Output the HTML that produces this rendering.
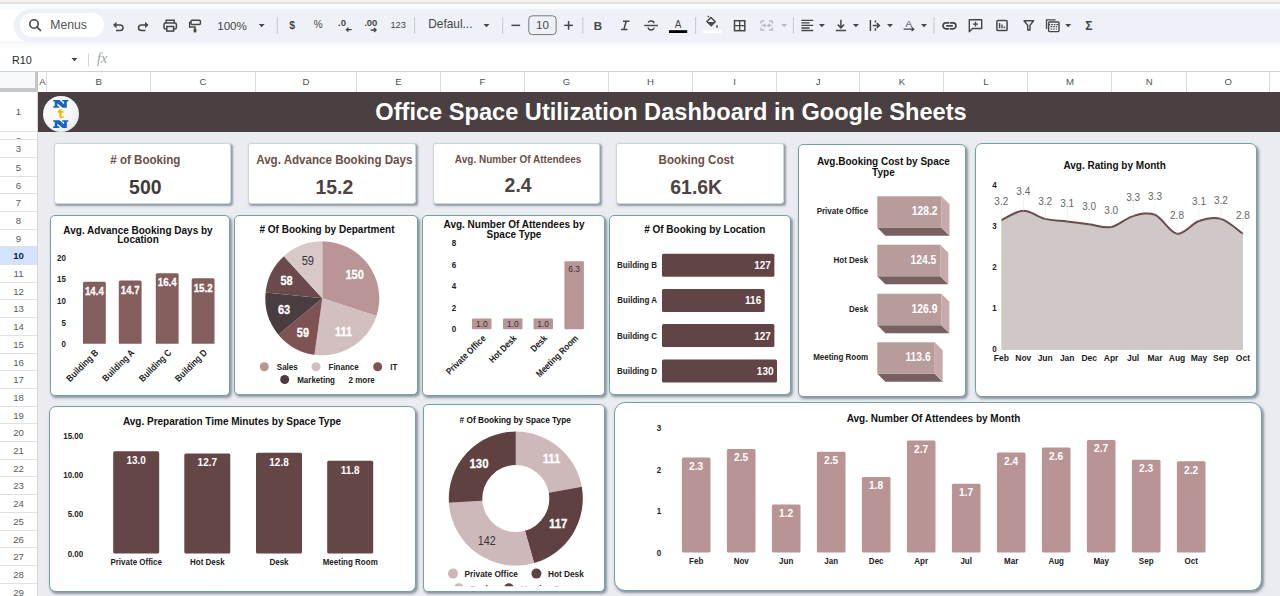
<!DOCTYPE html><html><head><meta charset="utf-8"><style>
*{margin:0;padding:0;box-sizing:border-box}
html,body{width:1280px;height:596px;overflow:hidden;background:#fff;font-family:"Liberation Sans", sans-serif}
.abs{position:absolute}
.card{position:absolute;background:#fff;border:1.3px solid #73a2a4;border-radius:5px;box-shadow:1.5px 2px 2.5px rgba(60,80,90,.55)}
.kpi{position:absolute;background:#fff;border:1px solid #c8d8db;border-radius:3px;box-shadow:1.5px 1.5px 2px rgba(60,80,90,.5)}
svg text{font-family:"Liberation Sans", sans-serif}
</style></head><body>

<div class="abs" style="left:0;top:0;width:1280px;height:2px;background:#f3f2f0"></div>
<div class="abs" style="left:0;top:2px;width:1280px;height:1.5px;background:#e2e2e2"></div>
<div class="abs" style="left:0;top:3.5px;width:1280px;height:5px;background:#fafbfd"></div>
<div class="abs" style="left:0;top:41px;width:1280px;height:7px;background:linear-gradient(#f4f6fb,#fdfdfe)"></div>
<div class="abs" style="left:14px;top:8.5px;width:1266px;height:33px;background:#eef2f8;border-radius:17px 0 0 17px;box-shadow:0 0 1.5px #eef2f8"></div>
<div class="abs" style="left:20px;top:13px;width:84px;height:24px;background:#fff;border-radius:12px"></div>
<div class="abs" style="left:12px;top:52.5px;font-size:10.8px;color:#1f1f1f;line-height:14px">R10</div>
<div class="abs" style="left:88px;top:53px;width:1px;height:14px;background:#d8d8d8"></div>
<div class="abs" style="left:97px;top:51px;font-family:'Liberation Serif',serif;font-style:italic;font-size:14px;color:#9aa0a6;line-height:16px">fx</div>
<div class="abs" style="left:0;top:71px;width:1280px;height:1px;background:#d0d0d0"></div>
<div class="abs" style="left:0;top:72px;width:35px;height:16px;background:#f8f9fa"></div>
<div class="abs" style="left:35px;top:72px;width:3px;height:20px;background:#c6c6c6"></div>
<div class="abs" style="left:0;top:88px;width:38px;height:3.5px;background:#c6c6c6"></div>
<div class="abs" style="left:46.0px;top:72px;width:1px;height:20px;background:#dcdcdc"></div>
<div class="abs" style="left:38.0px;top:72px;width:8.8px;height:20px;text-align:center;font-size:9.6px;line-height:20px;color:#505050">A</div>
<div class="abs" style="left:149.7px;top:72px;width:1px;height:20px;background:#dcdcdc"></div>
<div class="abs" style="left:46.8px;top:72px;width:103.7px;height:20px;text-align:center;font-size:9.6px;line-height:20px;color:#505050">B</div>
<div class="abs" style="left:254.7px;top:72px;width:1px;height:20px;background:#dcdcdc"></div>
<div class="abs" style="left:150.5px;top:72px;width:105.0px;height:20px;text-align:center;font-size:9.6px;line-height:20px;color:#505050">C</div>
<div class="abs" style="left:355.7px;top:72px;width:1px;height:20px;background:#dcdcdc"></div>
<div class="abs" style="left:255.5px;top:72px;width:101.0px;height:20px;text-align:center;font-size:9.6px;line-height:20px;color:#505050">D</div>
<div class="abs" style="left:439.7px;top:72px;width:1px;height:20px;background:#dcdcdc"></div>
<div class="abs" style="left:356.5px;top:72px;width:84.0px;height:20px;text-align:center;font-size:9.6px;line-height:20px;color:#505050">E</div>
<div class="abs" style="left:523.7px;top:72px;width:1px;height:20px;background:#dcdcdc"></div>
<div class="abs" style="left:440.5px;top:72px;width:84.0px;height:20px;text-align:center;font-size:9.6px;line-height:20px;color:#505050">F</div>
<div class="abs" style="left:607.7px;top:72px;width:1px;height:20px;background:#dcdcdc"></div>
<div class="abs" style="left:524.5px;top:72px;width:84.0px;height:20px;text-align:center;font-size:9.6px;line-height:20px;color:#505050">G</div>
<div class="abs" style="left:691.7px;top:72px;width:1px;height:20px;background:#dcdcdc"></div>
<div class="abs" style="left:608.5px;top:72px;width:84.0px;height:20px;text-align:center;font-size:9.6px;line-height:20px;color:#505050">H</div>
<div class="abs" style="left:775.7px;top:72px;width:1px;height:20px;background:#dcdcdc"></div>
<div class="abs" style="left:692.5px;top:72px;width:84.0px;height:20px;text-align:center;font-size:9.6px;line-height:20px;color:#505050">I</div>
<div class="abs" style="left:859.2px;top:72px;width:1px;height:20px;background:#dcdcdc"></div>
<div class="abs" style="left:776.5px;top:72px;width:83.5px;height:20px;text-align:center;font-size:9.6px;line-height:20px;color:#505050">J</div>
<div class="abs" style="left:943.2px;top:72px;width:1px;height:20px;background:#dcdcdc"></div>
<div class="abs" style="left:860.0px;top:72px;width:84.0px;height:20px;text-align:center;font-size:9.6px;line-height:20px;color:#505050">K</div>
<div class="abs" style="left:1027.2px;top:72px;width:1px;height:20px;background:#dcdcdc"></div>
<div class="abs" style="left:944.0px;top:72px;width:84.0px;height:20px;text-align:center;font-size:9.6px;line-height:20px;color:#505050">L</div>
<div class="abs" style="left:1111.2px;top:72px;width:1px;height:20px;background:#dcdcdc"></div>
<div class="abs" style="left:1028.0px;top:72px;width:84.0px;height:20px;text-align:center;font-size:9.6px;line-height:20px;color:#505050">M</div>
<div class="abs" style="left:1185.7px;top:72px;width:1px;height:20px;background:#dcdcdc"></div>
<div class="abs" style="left:1112.0px;top:72px;width:74.5px;height:20px;text-align:center;font-size:9.6px;line-height:20px;color:#505050">N</div>
<div class="abs" style="left:1269.2px;top:72px;width:1px;height:20px;background:#dcdcdc"></div>
<div class="abs" style="left:1186.5px;top:72px;width:83.5px;height:20px;text-align:center;font-size:9.6px;line-height:20px;color:#505050">O</div>
<div class="abs" style="left:1289.2px;top:72px;width:1px;height:20px;background:#dcdcdc"></div>
<div class="abs" style="left:1270.0px;top:72px;width:20.0px;height:20px;text-align:center;font-size:9.6px;line-height:20px;color:#505050"></div>
<div class="abs" style="left:37px;top:92px;width:1px;height:504px;background:#d6d6d6"></div>
<div class="abs" style="left:0;top:92.0px;width:37px;height:40.0px;background:#fff;overflow:hidden;text-align:center;font-size:9.6px;font-weight:normal;line-height:40.0px;color:#5a5a5a">1</div>
<div class="abs" style="left:0;top:131px;width:37px;height:1px;background:#e1e1e1"></div>
<div class="abs" style="left:0;top:132.0px;width:37px;height:8.0px;background:#fff;overflow:hidden;text-align:center;font-size:9.6px;font-weight:normal;line-height:17.7px;color:#5a5a5a">2</div>
<div class="abs" style="left:0;top:139px;width:37px;height:1px;background:#e1e1e1"></div>
<div class="abs" style="left:0;top:140.0px;width:37px;height:18.0px;background:#fff;overflow:hidden;text-align:center;font-size:9.6px;font-weight:normal;line-height:18.0px;color:#5a5a5a">3</div>
<div class="abs" style="left:0;top:157px;width:37px;height:1px;background:#e1e1e1"></div>
<div class="abs" style="left:0;top:158.0px;width:37px;height:19.0px;background:#fff;overflow:hidden;text-align:center;font-size:9.6px;font-weight:normal;line-height:19.0px;color:#5a5a5a">5</div>
<div class="abs" style="left:0;top:176px;width:37px;height:1px;background:#e1e1e1"></div>
<div class="abs" style="left:0;top:177.0px;width:37px;height:17.0px;background:#fff;overflow:hidden;text-align:center;font-size:9.6px;font-weight:normal;line-height:17.7px;color:#5a5a5a">6</div>
<div class="abs" style="left:0;top:193px;width:37px;height:1px;background:#e1e1e1"></div>
<div class="abs" style="left:0;top:194.0px;width:37px;height:18.0px;background:#fff;overflow:hidden;text-align:center;font-size:9.6px;font-weight:normal;line-height:18.0px;color:#5a5a5a">7</div>
<div class="abs" style="left:0;top:211px;width:37px;height:1px;background:#e1e1e1"></div>
<div class="abs" style="left:0;top:212.0px;width:37px;height:18.0px;background:#fff;overflow:hidden;text-align:center;font-size:9.6px;font-weight:normal;line-height:18.0px;color:#5a5a5a">8</div>
<div class="abs" style="left:0;top:229px;width:37px;height:1px;background:#e1e1e1"></div>
<div class="abs" style="left:0;top:230.0px;width:37px;height:17.0px;background:#fff;overflow:hidden;text-align:center;font-size:9.6px;font-weight:normal;line-height:17.7px;color:#5a5a5a">9</div>
<div class="abs" style="left:0;top:246px;width:37px;height:1px;background:#e1e1e1"></div>
<div class="abs" style="left:0;top:247.0px;width:37px;height:18.0px;background:#d3e3fd;overflow:hidden;text-align:center;font-size:9.6px;font-weight:bold;line-height:18.0px;color:#0b1f4a">10</div>
<div class="abs" style="left:0;top:264px;width:37px;height:1px;background:#e1e1e1"></div>
<div class="abs" style="left:0;top:265.0px;width:37px;height:18.0px;background:#fff;overflow:hidden;text-align:center;font-size:9.6px;font-weight:normal;line-height:18.0px;color:#5a5a5a">11</div>
<div class="abs" style="left:0;top:282px;width:37px;height:1px;background:#e1e1e1"></div>
<div class="abs" style="left:0;top:283.0px;width:37px;height:17.0px;background:#fff;overflow:hidden;text-align:center;font-size:9.6px;font-weight:normal;line-height:17.7px;color:#5a5a5a">12</div>
<div class="abs" style="left:0;top:299px;width:37px;height:1px;background:#e1e1e1"></div>
<div class="abs" style="left:0;top:300.0px;width:37px;height:18.0px;background:#fff;overflow:hidden;text-align:center;font-size:9.6px;font-weight:normal;line-height:18.0px;color:#5a5a5a">13</div>
<div class="abs" style="left:0;top:317px;width:37px;height:1px;background:#e1e1e1"></div>
<div class="abs" style="left:0;top:318.0px;width:37px;height:18.0px;background:#fff;overflow:hidden;text-align:center;font-size:9.6px;font-weight:normal;line-height:18.0px;color:#5a5a5a">14</div>
<div class="abs" style="left:0;top:335px;width:37px;height:1px;background:#e1e1e1"></div>
<div class="abs" style="left:0;top:336.0px;width:37px;height:18.0px;background:#fff;overflow:hidden;text-align:center;font-size:9.6px;font-weight:normal;line-height:18.0px;color:#5a5a5a">15</div>
<div class="abs" style="left:0;top:353px;width:37px;height:1px;background:#e1e1e1"></div>
<div class="abs" style="left:0;top:354.0px;width:37px;height:17.0px;background:#fff;overflow:hidden;text-align:center;font-size:9.6px;font-weight:normal;line-height:17.7px;color:#5a5a5a">16</div>
<div class="abs" style="left:0;top:370px;width:37px;height:1px;background:#e1e1e1"></div>
<div class="abs" style="left:0;top:371.0px;width:37px;height:18.0px;background:#fff;overflow:hidden;text-align:center;font-size:9.6px;font-weight:normal;line-height:18.0px;color:#5a5a5a">17</div>
<div class="abs" style="left:0;top:388px;width:37px;height:1px;background:#e1e1e1"></div>
<div class="abs" style="left:0;top:389.0px;width:37px;height:18.0px;background:#fff;overflow:hidden;text-align:center;font-size:9.6px;font-weight:normal;line-height:18.0px;color:#5a5a5a">18</div>
<div class="abs" style="left:0;top:406px;width:37px;height:1px;background:#e1e1e1"></div>
<div class="abs" style="left:0;top:407.0px;width:37px;height:17.0px;background:#fff;overflow:hidden;text-align:center;font-size:9.6px;font-weight:normal;line-height:17.7px;color:#5a5a5a">19</div>
<div class="abs" style="left:0;top:423px;width:37px;height:1px;background:#e1e1e1"></div>
<div class="abs" style="left:0;top:424.0px;width:37px;height:18.0px;background:#fff;overflow:hidden;text-align:center;font-size:9.6px;font-weight:normal;line-height:18.0px;color:#5a5a5a">20</div>
<div class="abs" style="left:0;top:441px;width:37px;height:1px;background:#e1e1e1"></div>
<div class="abs" style="left:0;top:442.0px;width:37px;height:18.0px;background:#fff;overflow:hidden;text-align:center;font-size:9.6px;font-weight:normal;line-height:18.0px;color:#5a5a5a">21</div>
<div class="abs" style="left:0;top:459px;width:37px;height:1px;background:#e1e1e1"></div>
<div class="abs" style="left:0;top:460.0px;width:37px;height:17.0px;background:#fff;overflow:hidden;text-align:center;font-size:9.6px;font-weight:normal;line-height:17.7px;color:#5a5a5a">22</div>
<div class="abs" style="left:0;top:476px;width:37px;height:1px;background:#e1e1e1"></div>
<div class="abs" style="left:0;top:477.0px;width:37px;height:18.0px;background:#fff;overflow:hidden;text-align:center;font-size:9.6px;font-weight:normal;line-height:18.0px;color:#5a5a5a">23</div>
<div class="abs" style="left:0;top:494px;width:37px;height:1px;background:#e1e1e1"></div>
<div class="abs" style="left:0;top:495.0px;width:37px;height:18.0px;background:#fff;overflow:hidden;text-align:center;font-size:9.6px;font-weight:normal;line-height:18.0px;color:#5a5a5a">24</div>
<div class="abs" style="left:0;top:512px;width:37px;height:1px;background:#e1e1e1"></div>
<div class="abs" style="left:0;top:513.0px;width:37px;height:18.0px;background:#fff;overflow:hidden;text-align:center;font-size:9.6px;font-weight:normal;line-height:18.0px;color:#5a5a5a">25</div>
<div class="abs" style="left:0;top:530px;width:37px;height:1px;background:#e1e1e1"></div>
<div class="abs" style="left:0;top:531.0px;width:37px;height:17.0px;background:#fff;overflow:hidden;text-align:center;font-size:9.6px;font-weight:normal;line-height:17.7px;color:#5a5a5a">26</div>
<div class="abs" style="left:0;top:547px;width:37px;height:1px;background:#e1e1e1"></div>
<div class="abs" style="left:0;top:548.0px;width:37px;height:18.0px;background:#fff;overflow:hidden;text-align:center;font-size:9.6px;font-weight:normal;line-height:18.0px;color:#5a5a5a">27</div>
<div class="abs" style="left:0;top:565px;width:37px;height:1px;background:#e1e1e1"></div>
<div class="abs" style="left:0;top:566.0px;width:37px;height:18.0px;background:#fff;overflow:hidden;text-align:center;font-size:9.6px;font-weight:normal;line-height:18.0px;color:#5a5a5a">28</div>
<div class="abs" style="left:0;top:583px;width:37px;height:1px;background:#e1e1e1"></div>
<div class="abs" style="left:0;top:584.0px;width:37px;height:17.0px;background:#fff;overflow:hidden;text-align:center;font-size:9.6px;font-weight:normal;line-height:17.7px;color:#5a5a5a">29</div>
<div class="abs" style="left:0;top:600px;width:37px;height:1px;background:#e1e1e1"></div>
<div class="abs" style="left:38px;top:132px;width:1242px;height:464px;background:#ebebf2"></div>
<div class="abs" style="left:38px;top:92px;width:1242px;height:40px;background:#4a4041"></div>
<div class="abs" style="left:38px;top:92px;width:1242px;height:40px;text-align:center;padding-left:24px;font-size:23.6px;font-weight:bold;color:#fff;line-height:40px">Office Space Utilization Dashboard in Google Sheets</div>
<div class="abs" style="left:42.5px;top:95.5px;width:36.5px;height:36.5px;border-radius:50%;background:radial-gradient(circle at 40% 35%,#fff 0%,#f4f4f6 55%,#dcdce2 100%)"></div>
<svg class="abs" style="left:0;top:0" width="100" height="140"><path d="M53.20,100.00 L59.54,100.00 L64.07,104.23 L64.07,101.54 L62.26,101.54 L62.26,100.00 L68.30,100.00 L68.30,101.54 L66.79,101.54 L66.79,107.70 L62.56,107.70 L57.43,103.23 L57.43,106.16 L59.24,106.16 L59.24,107.70 L53.20,107.70 L53.20,106.16 L54.71,106.16 L54.71,101.54 L53.20,101.54 Z" fill="#1565c0"/><path d="M53.20,120.20 L59.54,120.20 L64.07,124.44 L64.07,121.74 L62.26,121.74 L62.26,120.20 L68.30,120.20 L68.30,121.74 L66.79,121.74 L66.79,127.90 L62.56,127.90 L57.43,123.43 L57.43,126.36 L59.24,126.36 L59.24,127.90 L53.20,127.90 L53.20,126.36 L54.71,126.36 L54.71,121.74 L53.20,121.74 Z" fill="#1565c0"/><path d="M59.5,109.5 L61.6,109 V111.2 H63.6 V112.8 H61.6 V116 Q61.8,117 63.8,116.3 L63.6,117.6 Q60,119.5 59.4,116.6 V112.8 H57.8 V111.4 Z" fill="#f4b400"/></svg>
<svg class="abs" style="left:0;top:0" width="1280" height="80"><circle cx="34" cy="24" r="4.2" fill="none" stroke="#444746" stroke-width="1.6"/><path d="M37,27 L40.5,30.5" stroke="#444746" stroke-width="1.7" stroke-linecap="round"/><text x="50.3" y="29.3" font-size="12.2" font-family="Liberation Sans" font-weight="normal" fill="#555" text-anchor="start" >Menus</text><path d="M115.5,25 H120 A3,2.8 0 0 1 120,30.6 H116" fill="none" stroke="#444746" stroke-width="1.5"/><path d="M113,25 L116.5,21.8 V28.2 Z" fill="#444746"/><path d="M146,25 H141.5 A3,2.8 0 0 0 141.5,30.6 H145.5" fill="none" stroke="#444746" stroke-width="1.5"/><path d="M148.5,25 L145,21.8 V28.2 Z" fill="#444746"/><path d="M166.2,23 V20.2 H174.2 V23" fill="none" stroke="#444746" stroke-width="1.5"/><rect x="164" y="23" width="12.4" height="6" rx="1.5" fill="none" stroke="#444746" stroke-width="1.5"/><rect x="166.8" y="26.5" width="6.8" height="4.6" fill="#eef2f9" stroke="#444746" stroke-width="1.5"/><rect x="191" y="20.3" width="9.4" height="4.2" rx="1" fill="none" stroke="#444746" stroke-width="1.5"/><path d="M191,22.4 H189.6 V27 H195 V29" fill="none" stroke="#444746" stroke-width="1.4"/><rect x="193.6" y="28.5" width="2.8" height="4" rx="1" fill="#444746"/><text x="217.2" y="29.6" font-size="11.6" font-family="Liberation Sans" font-weight="normal" fill="#444746" text-anchor="start" >100%</text><path d="M258.7,24.0 L264.7,24.0 L261.7,27.3 Z" fill="#444746"/><rect x="276.8" y="17" width="1" height="17" fill="#c7c7c7"/><text x="292.2" y="28.6" font-size="10.5" font-family="Liberation Sans" font-weight="bold" fill="#444746" text-anchor="middle" >$</text><text x="318.3" y="28.4" font-size="10" font-family="Liberation Sans" font-weight="normal" fill="#444746" text-anchor="middle" >%</text><text x="342" y="26.4" font-size="9.5" font-family="Liberation Sans" font-weight="bold" fill="#444746" text-anchor="middle" >.0</text><path d="M351.7,29.7 H346.5 M348.5,27.8 L346.4,29.7 L348.5,31.6" fill="none" stroke="#444746" stroke-width="1.3"/><text x="370.8" y="26.4" font-size="9.5" font-family="Liberation Sans" font-weight="bold" fill="#444746" text-anchor="middle" >.00</text><path d="M370.6,30 H376 M374,28.1 L376.1,30 L374,31.9" fill="none" stroke="#444746" stroke-width="1.3"/><text x="398.2" y="28.2" font-size="9.3" font-family="Liberation Sans" font-weight="normal" fill="#444746" text-anchor="middle" >123</text><rect x="414.1" y="17" width="1" height="17" fill="#c7c7c7"/><text x="428.2" y="28.4" font-size="11.9" font-family="Liberation Sans" font-weight="normal" fill="#444746" text-anchor="start" >Defaul...</text><path d="M483.5,24.0 L489.5,24.0 L486.5,27.3 Z" fill="#444746"/><rect x="502.2" y="17" width="1" height="17" fill="#c7c7c7"/><rect x="511.4" y="24.6" width="8.7" height="1.5" fill="#444746"/><rect x="528.8" y="15.8" width="27.3" height="18.8" rx="3.5" fill="none" stroke="#767976" stroke-width="1"/><text x="542.4" y="28.8" font-size="11.6" font-family="Liberation Sans" font-weight="normal" fill="#444746" text-anchor="middle" >10</text><rect x="564.2" y="24.6" width="8.8" height="1.5" fill="#444746"/><rect x="567.85" y="21" width="1.5" height="8.8" fill="#444746"/><rect x="582.4" y="17" width="1" height="17" fill="#c7c7c7"/><text x="598" y="29.6" font-size="11.5" font-family="Liberation Sans" font-weight="bold" fill="#444746" text-anchor="middle" >B</text><path d="M623,21.2 H629.5 M621,29.6 H627.5 M626.2,21.2 L623.8,29.6" fill="none" stroke="#444746" stroke-width="1.5"/><path d="M644.2,25.5 H658" stroke="#444746" stroke-width="1.4"/><path d="M654,23.2 C654,20.6 648.5,20.2 648.3,22.6 M648.2,27.6 C648.2,30.8 654.2,30.8 654,27.6" fill="none" stroke="#444746" stroke-width="1.4"/><text x="678.2" y="27.6" font-size="10" font-family="Liberation Sans" font-weight="normal" fill="#444746" text-anchor="middle" >A</text><rect x="669" y="30.2" width="18.2" height="2.8" fill="#000"/><rect x="695.1" y="17" width="1" height="17" fill="#c7c7c7"/><path d="M707,21.5 L711,17.5 L715.2,21.7 L711.2,25.7 Z" fill="none" stroke="#444746" stroke-width="1.5"/><path d="M707.6,22 H714.7 L711.2,25.5 Z" fill="#444746"/><path d="M709,17 L707.8,15.9" stroke="#444746" stroke-width="1.4"/><path d="M717,24.5 Q718.6,27 717,28 Q715.4,27 717,24.5 Z" fill="#444746"/><rect x="702.6" y="30.3" width="19.4" height="2.6" fill="#fff"/><rect x="734.5" y="20.7" width="10.3" height="10" fill="none" stroke="#444746" stroke-width="1.5"/><path d="M739.65,20.7 V30.7 M734.5,25.7 H744.8" stroke="#444746" stroke-width="1.3"/><path d="M761,21 V23.4 M761,27.4 V30 H764.3 M761,21 H764.3 M772.4,21 V23.4 M772.4,27.4 V30 H769 M772.4,21 H769" fill="none" stroke="#b8babc" stroke-width="1.3"/><path d="M761.5,25.4 H765.5 M764,23.8 L765.8,25.4 L764,27 M771.8,25.4 H768 M769.5,23.8 L767.6,25.4 L769.5,27" fill="none" stroke="#b8babc" stroke-width="1.1"/><path d="M781.2,24.0 L787.2,24.0 L784.2,27.3 Z" fill="#b8babc"/><rect x="792.9" y="17" width="1" height="17" fill="#c7c7c7"/><path d="M801.4,20.3 H813.2 M801.4,22.9 H809.6 M801.4,25.4 H813.2 M801.4,28 H809.6 M801.4,30.5 H813.2" stroke="#444746" stroke-width="1.3"/><path d="M818.9,24.0 L824.9,24.0 L821.9,27.3 Z" fill="#444746"/><path d="M840.9,19.8 V27.5 M837.7,24.5 L840.9,27.8 L844.1,24.5 M835.8,30.6 H846" fill="none" stroke="#444746" stroke-width="1.5"/><path d="M852.9,24.0 L858.9,24.0 L855.9,27.3 Z" fill="#444746"/><path d="M870.4,20 V31 M875.4,20.5 V22.5 M875.4,28.3 V30.8 M872.8,25.5 H879 M876.8,23 L879.4,25.5 L876.8,28" fill="none" stroke="#444746" stroke-width="1.5"/><path d="M887,24.0 L893,24.0 L890,27.3 Z" fill="#444746"/><text x="908.7" y="26.8" font-size="9.8" font-family="Liberation Sans" font-weight="normal" fill="#444746" text-anchor="middle" >A</text><path d="M903.6,29.2 H913.5 M911.6,27.4 L913.8,29.2 L911.6,31" fill="none" stroke="#444746" stroke-width="1.3"/><path d="M921,24.0 L927,24.0 L924,27.3 Z" fill="#444746"/><rect x="933.4" y="17" width="1" height="17" fill="#c7c7c7"/><path d="M948.5,22.8 H946 A3,3 0 0 0 946,28.8 H948.5 M950.5,22.8 H953 A3,3 0 0 1 953,28.8 H950.5 M946.8,25.8 H952.2" fill="none" stroke="#444746" stroke-width="1.7" stroke-linecap="round"/><path d="M969.3,31.7 V19.8 H981.7 V28.5 H972.5 Z" fill="none" stroke="#444746" stroke-width="1.4" stroke-linejoin="round"/><path d="M975.5,21.7 V26.6 M973,24.15 H978" stroke="#444746" stroke-width="1.4"/><rect x="996.9" y="20.4" width="10.2" height="10.2" rx="1.2" fill="none" stroke="#444746" stroke-width="1.5"/><path d="M999.6,23 V28.3 M1002,24.6 V28.3 M1004.4,26.4 V28.3" stroke="#444746" stroke-width="1.4"/><path d="M1024,20.8 H1033.6 L1030,25.3 V30 H1027.7 V25.3 Z" fill="none" stroke="#444746" stroke-width="1.4" stroke-linejoin="round"/><path d="M1046.5,29 V19.9 H1055.6" fill="none" stroke="#444746" stroke-width="1.3"/><rect x="1048.6" y="22" width="10.4" height="9.6" rx="1" fill="none" stroke="#444746" stroke-width="1.4"/><path d="M1048.6,24.6 H1059 M1050.6,26.6 H1057 M1050.6,29 H1057" stroke="#444746" stroke-width="1.2" stroke-dasharray="1.6,1"/><path d="M1065.2,24.0 L1071.2,24.0 L1068.2,27.3 Z" fill="#444746"/><text x="1088.8" y="30" font-size="12" font-family="Liberation Sans" font-weight="bold" fill="#444746" text-anchor="middle" >Σ</text><path d="M71.5,58.0 L77.5,58.0 L74.5,61.3 Z" fill="#444"/></svg>
<div class="kpi" style="left:53.8px;top:142.9px;width:177.2px;height:61.0px;"></div>
<div class="kpi" style="left:248.4px;top:142.9px;width:168.1px;height:61.0px;"></div>
<div class="kpi" style="left:432.8px;top:142.9px;width:167.5px;height:61.0px;"></div>
<div class="kpi" style="left:616.4px;top:142.9px;width:167.5px;height:61.0px;"></div>
<div class="card" style="left:50.0px;top:215.0px;width:179.6px;height:180.6px;border-radius:5px"></div>
<div class="card" style="left:234.4px;top:215.0px;width:183.6px;height:179.6px;border-radius:5px"></div>
<div class="card" style="left:421.7px;top:215.0px;width:182.9px;height:180.6px;border-radius:5px"></div>
<div class="card" style="left:609.4px;top:215.0px;width:181.9px;height:179.6px;border-radius:5px"></div>
<div class="card" style="left:798.2px;top:144.4px;width:167.8px;height:252.6px;border-radius:5px"></div>
<div class="card" style="left:975.0px;top:143.2px;width:282.4px;height:253.8px;border-radius:7px"></div>
<div class="card" style="left:49.4px;top:406.0px;width:366.2px;height:186.3px;border-radius:7px"></div>
<div class="card" style="left:422.5px;top:404.4px;width:182.3px;height:187.8px;border-radius:5px"></div>
<div class="card" style="left:614.2px;top:402.4px;width:647.6px;height:188.6px;border-radius:11px"></div>
<svg class="abs" style="left:0;top:0" width="1280" height="596" viewBox="0 0 1280 596"><text transform="translate(145.3,159.5) scale(1,1.05)" font-size="11.6" fill="#6a4f4b" font-weight="bold" text-anchor="middle" dominant-baseline="central" ># of Booking</text>
<text transform="translate(145.3,186.7) scale(1,1.08)" font-size="19.4" fill="#3f3b3b" font-weight="bold" text-anchor="middle" dominant-baseline="central" >500</text>
<text transform="translate(334.3,159.5) scale(1,1.05)" font-size="11.6" fill="#6a4f4b" font-weight="bold" text-anchor="middle" dominant-baseline="central" >Avg. Advance Booking Days</text>
<text transform="translate(334.3,186.7) scale(1,1.08)" font-size="19.4" fill="#4e4242" font-weight="bold" text-anchor="middle" dominant-baseline="central" >15.2</text>
<text transform="translate(518.1,159.5) scale(1,1.05)" font-size="10" fill="#6a4f4b" font-weight="bold" text-anchor="middle" dominant-baseline="central" >Avg. Number Of Attendees</text>
<text transform="translate(518.1,185.2) scale(1,1.08)" font-size="19.4" fill="#4e4242" font-weight="bold" text-anchor="middle" dominant-baseline="central" >2.4</text>
<text transform="translate(696.2,159.5) scale(1,1.05)" font-size="11.6" fill="#6a4f4b" font-weight="bold" text-anchor="middle" dominant-baseline="central" >Booking Cost</text>
<text transform="translate(696.2,186.7) scale(1,1.08)" font-size="19.4" fill="#4e4242" font-weight="bold" text-anchor="middle" dominant-baseline="central" >61.6K</text>
<text transform="translate(138.0,230.0) scale(1,1.0)" font-size="10" fill="#111" font-weight="bold" text-anchor="middle" dominant-baseline="central" >Avg. Advance Booking Days by</text>
<text transform="translate(138.0,239.0) scale(1,1.0)" font-size="10" fill="#111" font-weight="bold" text-anchor="middle" dominant-baseline="central" >Location</text>
<text transform="translate(66.0,257.7) scale(1,1.16)" font-size="8" fill="#222" font-weight="bold" text-anchor="end" dominant-baseline="central" >20</text>
<text transform="translate(66.0,279.2) scale(1,1.16)" font-size="8" fill="#222" font-weight="bold" text-anchor="end" dominant-baseline="central" >15</text>
<text transform="translate(66.0,300.8) scale(1,1.16)" font-size="8" fill="#222" font-weight="bold" text-anchor="end" dominant-baseline="central" >10</text>
<text transform="translate(66.0,322.3) scale(1,1.16)" font-size="8" fill="#222" font-weight="bold" text-anchor="end" dominant-baseline="central" >5</text>
<text transform="translate(66.0,343.8) scale(1,1.16)" font-size="8" fill="#222" font-weight="bold" text-anchor="end" dominant-baseline="central" >0</text>
<path d="M83,343.8 V283.308 Q83,281.808 84.5,281.808 H104.3 Q105.8,281.808 105.8,283.308 V343.8 Z" fill="#845d5d"/>
<text transform="translate(94.4,290.8) scale(1,1.16)" font-size="9.7" fill="#fff" font-weight="bold" text-anchor="middle" dominant-baseline="central"  stroke="#fff" stroke-width="0.25">14.4</text>
<text transform="translate(96.8,351) rotate(-45) scale(1.03,1.18)" font-size="8" font-weight="bold" fill="#222" text-anchor="end" dominant-baseline="central">Building B</text>
<path d="M118.8,343.8 V282.0165 Q118.8,280.5165 120.3,280.5165 H140.1 Q141.6,280.5165 141.6,282.0165 V343.8 Z" fill="#845d5d"/>
<text transform="translate(130.2,289.5) scale(1,1.16)" font-size="9.7" fill="#fff" font-weight="bold" text-anchor="middle" dominant-baseline="central"  stroke="#fff" stroke-width="0.25">14.7</text>
<text transform="translate(132.6,351) rotate(-45) scale(1.03,1.18)" font-size="8" font-weight="bold" fill="#222" text-anchor="end" dominant-baseline="central">Building A</text>
<path d="M155.8,343.8 V274.698 Q155.8,273.198 157.3,273.198 H177.10000000000002 Q178.60000000000002,273.198 178.60000000000002,274.698 V343.8 Z" fill="#845d5d"/>
<text transform="translate(167.2,282.2) scale(1,1.16)" font-size="9.7" fill="#fff" font-weight="bold" text-anchor="middle" dominant-baseline="central"  stroke="#fff" stroke-width="0.25">16.4</text>
<text transform="translate(169.60000000000002,351) rotate(-45) scale(1.03,1.18)" font-size="8" font-weight="bold" fill="#222" text-anchor="end" dominant-baseline="central">Building C</text>
<path d="M191.7,343.8 V279.864 Q191.7,278.364 193.2,278.364 H213.0 Q214.5,278.364 214.5,279.864 V343.8 Z" fill="#845d5d"/>
<text transform="translate(203.1,287.4) scale(1,1.16)" font-size="9.7" fill="#fff" font-weight="bold" text-anchor="middle" dominant-baseline="central"  stroke="#fff" stroke-width="0.25">15.2</text>
<text transform="translate(205.5,351) rotate(-45) scale(1.03,1.18)" font-size="8" font-weight="bold" fill="#222" text-anchor="end" dominant-baseline="central">Building D</text>
<text transform="translate(327.0,229.0) scale(1,1.0)" font-size="10" fill="#111" font-weight="bold" text-anchor="middle" dominant-baseline="central" ># Of Booking by Department</text>
<path d="M322.3,298.3 L322.30,241.30 A57,57 0 0 1 376.51,315.91 Z" fill="#b99595"/>
<text transform="translate(354.6,274.8) scale(1,1.16)" font-size="11" fill="#fff" font-weight="bold" text-anchor="middle" dominant-baseline="central"  stroke="#fff" stroke-width="0.25">150</text>
<path d="M322.3,298.3 L376.51,315.91 A57,57 0 0 1 314.45,354.76 Z" fill="#d2bfbf"/>
<text transform="translate(343.5,332.1) scale(1,1.16)" font-size="11" fill="#fff" font-weight="bold" text-anchor="middle" dominant-baseline="central"  stroke="#fff" stroke-width="0.25">111</text>
<path d="M322.3,298.3 L314.45,354.76 A57,57 0 0 1 278.38,334.63 Z" fill="#7f5353"/>
<text transform="translate(302.9,333.1) scale(1,1.16)" font-size="11" fill="#fff" font-weight="bold" text-anchor="middle" dominant-baseline="central"  stroke="#fff" stroke-width="0.25">59</text>
<path d="M322.3,298.3 L278.38,334.63 A57,57 0 0 1 265.59,292.58 Z" fill="#4a3d40"/>
<text transform="translate(284.1,309.9) scale(1,1.16)" font-size="11" fill="#fff" font-weight="bold" text-anchor="middle" dominant-baseline="central"  stroke="#fff" stroke-width="0.25">63</text>
<path d="M322.3,298.3 L265.59,292.58 A57,57 0 0 1 283.81,256.26 Z" fill="#6a4a4b"/>
<text transform="translate(286.6,280.4) scale(1,1.16)" font-size="11" fill="#fff" font-weight="bold" text-anchor="middle" dominant-baseline="central"  stroke="#fff" stroke-width="0.25">58</text>
<path d="M322.3,298.3 L283.81,256.26 A57,57 0 0 1 322.30,241.30 Z" fill="#d8c8c8"/>
<text transform="translate(307.8,261.1) scale(1,1.16)" font-size="11" fill="#333" font-weight="normal" text-anchor="middle" dominant-baseline="central" >59</text>
<circle cx="264.3" cy="366.7" r="4.5" fill="#b99595"/>
<text transform="translate(276.8,366.7) scale(1,1.16)" font-size="8" fill="#222" font-weight="bold" text-anchor="start" dominant-baseline="central" >Sales</text>
<circle cx="316" cy="366.7" r="4.5" fill="#d2bfbf"/>
<text transform="translate(328.5,366.7) scale(1,1.16)" font-size="8" fill="#222" font-weight="bold" text-anchor="start" dominant-baseline="central" >Finance</text>
<circle cx="377.7" cy="366.7" r="4.5" fill="#7f5353"/>
<text transform="translate(390.2,366.7) scale(1,1.16)" font-size="8" fill="#222" font-weight="bold" text-anchor="start" dominant-baseline="central" >IT</text>
<circle cx="284.7" cy="379.5" r="4.5" fill="#4a3d40"/>
<text transform="translate(297.2,379.5) scale(1,1.16)" font-size="8" fill="#222" font-weight="bold" text-anchor="start" dominant-baseline="central" >Marketing</text>
<text transform="translate(348.5,379.5) scale(1,1.16)" font-size="8" fill="#222" font-weight="bold" text-anchor="start" dominant-baseline="central" >2 more</text>
<text transform="translate(514.0,224.5) scale(1,1.0)" font-size="10" fill="#111" font-weight="bold" text-anchor="middle" dominant-baseline="central" >Avg. Number Of Attendees by</text>
<text transform="translate(514.0,234.5) scale(1,1.0)" font-size="10" fill="#111" font-weight="bold" text-anchor="middle" dominant-baseline="central" >Space Type</text>
<text transform="translate(454.0,243.0) scale(1,1.16)" font-size="8" fill="#222" font-weight="bold" text-anchor="middle" dominant-baseline="central" >8</text>
<text transform="translate(454.0,264.6) scale(1,1.16)" font-size="8" fill="#222" font-weight="bold" text-anchor="middle" dominant-baseline="central" >6</text>
<text transform="translate(454.0,286.1) scale(1,1.16)" font-size="8" fill="#222" font-weight="bold" text-anchor="middle" dominant-baseline="central" >4</text>
<text transform="translate(454.0,307.6) scale(1,1.16)" font-size="8" fill="#222" font-weight="bold" text-anchor="middle" dominant-baseline="central" >2</text>
<text transform="translate(454.0,329.2) scale(1,1.16)" font-size="8" fill="#222" font-weight="bold" text-anchor="middle" dominant-baseline="central" >0</text>
<rect x="472" y="318.4" width="19.5" height="10.8" rx="1" fill="#b99696"/>
<text transform="translate(481.8,323.4) scale(1,1.16)" font-size="8.4" fill="#333" font-weight="normal" text-anchor="middle" dominant-baseline="central" >1.0</text>
<text transform="translate(484,336.6) rotate(-45) scale(1,1.16)" font-size="8" font-weight="bold" fill="#222" text-anchor="end" dominant-baseline="central">Private Office</text>
<rect x="503" y="318.4" width="19.5" height="10.8" rx="1" fill="#b99696"/>
<text transform="translate(512.8,323.4) scale(1,1.16)" font-size="8.4" fill="#333" font-weight="normal" text-anchor="middle" dominant-baseline="central" >1.0</text>
<text transform="translate(515,336.6) rotate(-45) scale(1,1.16)" font-size="8" font-weight="bold" fill="#222" text-anchor="end" dominant-baseline="central">Hot Desk</text>
<rect x="533.5" y="318.4" width="19.5" height="10.8" rx="1" fill="#b99696"/>
<text transform="translate(543.2,323.4) scale(1,1.16)" font-size="8.4" fill="#333" font-weight="normal" text-anchor="middle" dominant-baseline="central" >1.0</text>
<text transform="translate(545.5,336.6) rotate(-45) scale(1,1.16)" font-size="8" font-weight="bold" fill="#222" text-anchor="end" dominant-baseline="central">Desk</text>
<rect x="564.4" y="261.3" width="19.5" height="67.9" rx="1" fill="#b99696"/>
<text transform="translate(574.1,268.8) scale(1,1.16)" font-size="8.4" fill="#333" font-weight="normal" text-anchor="middle" dominant-baseline="central" >6.3</text>
<text transform="translate(576.4,336.6) rotate(-45) scale(1,1.16)" font-size="8" font-weight="bold" fill="#222" text-anchor="end" dominant-baseline="central">Meeting Room</text>
<text transform="translate(704.7,229.5) scale(1,1.0)" font-size="10" fill="#111" font-weight="bold" text-anchor="middle" dominant-baseline="central" ># Of Booking by Location</text>
<rect x="662" y="253.7" width="112.4" height="23" rx="1.5" fill="#614446"/>
<text transform="translate(770.9,265.0) scale(1,1.16)" font-size="10" fill="#fff" font-weight="bold" text-anchor="end" dominant-baseline="central" >127</text>
<text transform="translate(657.0,265.0) scale(1,1.16)" font-size="8" fill="#222" font-weight="bold" text-anchor="end" dominant-baseline="central" >Building B</text>
<rect x="662" y="288.9" width="102.7" height="23" rx="1.5" fill="#614446"/>
<text transform="translate(761.2,300.2) scale(1,1.16)" font-size="10" fill="#fff" font-weight="bold" text-anchor="end" dominant-baseline="central" >116</text>
<text transform="translate(657.0,300.2) scale(1,1.16)" font-size="8" fill="#222" font-weight="bold" text-anchor="end" dominant-baseline="central" >Building A</text>
<rect x="662" y="324" width="112.4" height="23" rx="1.5" fill="#614446"/>
<text transform="translate(770.9,335.3) scale(1,1.16)" font-size="10" fill="#fff" font-weight="bold" text-anchor="end" dominant-baseline="central" >127</text>
<text transform="translate(657.0,335.3) scale(1,1.16)" font-size="8" fill="#222" font-weight="bold" text-anchor="end" dominant-baseline="central" >Building C</text>
<rect x="662" y="359.4" width="115.0" height="23" rx="1.5" fill="#614446"/>
<text transform="translate(773.5,370.7) scale(1,1.16)" font-size="10" fill="#fff" font-weight="bold" text-anchor="end" dominant-baseline="central" >130</text>
<text transform="translate(657.0,370.7) scale(1,1.16)" font-size="8" fill="#222" font-weight="bold" text-anchor="end" dominant-baseline="central" >Building D</text>
<text transform="translate(883.4,161.3) scale(1,1.0)" font-size="10" fill="#111" font-weight="bold" text-anchor="middle" dominant-baseline="central" >Avg.Booking Cost by Space</text>
<text transform="translate(883.4,172.2) scale(1,1.0)" font-size="10" fill="#111" font-weight="bold" text-anchor="middle" dominant-baseline="central" >Type</text>
<path d="M877.3,227.8 L885.3,235.8 H949.5 L941.5,227.8 Z" fill="#766060"/>
<path d="M941.5,196.3 L949.5,204.3 V235.8 L941.5,227.8 Z" fill="#c7abab"/>
<rect x="877.3" y="196.3" width="64.2" height="31.5" fill="#b89b9b"/>
<text transform="translate(937.5,211.1) scale(1,1.16)" font-size="10.35" fill="#fff" font-weight="bold" text-anchor="end" dominant-baseline="central" >128.2</text>
<text transform="translate(868.2,211.1) scale(1,1.16)" font-size="8" fill="#222" font-weight="bold" text-anchor="end" dominant-baseline="central" >Private Office</text>
<path d="M877.3,276.2 L885.3,284.2 H948.3 L940.3,276.2 Z" fill="#766060"/>
<path d="M940.3,244.7 L948.3,252.7 V284.2 L940.3,276.2 Z" fill="#c7abab"/>
<rect x="877.3" y="244.7" width="63.0" height="31.5" fill="#b89b9b"/>
<text transform="translate(936.3,259.4) scale(1,1.16)" font-size="10.35" fill="#fff" font-weight="bold" text-anchor="end" dominant-baseline="central" >124.5</text>
<text transform="translate(868.2,259.4) scale(1,1.16)" font-size="8" fill="#222" font-weight="bold" text-anchor="end" dominant-baseline="central" >Hot Desk</text>
<path d="M877.3,325.2 L885.3,333.2 H949.4 L941.4,325.2 Z" fill="#766060"/>
<path d="M941.4,293.7 L949.4,301.7 V333.2 L941.4,325.2 Z" fill="#c7abab"/>
<rect x="877.3" y="293.7" width="64.1" height="31.5" fill="#b89b9b"/>
<text transform="translate(937.4,308.4) scale(1,1.16)" font-size="10.35" fill="#fff" font-weight="bold" text-anchor="end" dominant-baseline="central" >126.9</text>
<text transform="translate(868.2,308.4) scale(1,1.16)" font-size="8" fill="#222" font-weight="bold" text-anchor="end" dominant-baseline="central" >Desk</text>
<path d="M877.3,373.8 L885.3,381.8 H942.7 L934.7,373.8 Z" fill="#766060"/>
<path d="M934.7,342.3 L942.7,350.3 V381.8 L934.7,373.8 Z" fill="#c7abab"/>
<rect x="877.3" y="342.3" width="57.4" height="31.5" fill="#b89b9b"/>
<text transform="translate(930.7,357.1) scale(1,1.16)" font-size="10.35" fill="#fff" font-weight="bold" text-anchor="end" dominant-baseline="central" >113.6</text>
<text transform="translate(868.2,357.1) scale(1,1.16)" font-size="8" fill="#222" font-weight="bold" text-anchor="end" dominant-baseline="central" >Meeting Room</text>
<text transform="translate(1114.6,165.4) scale(1,1.0)" font-size="10" fill="#111" font-weight="bold" text-anchor="middle" dominant-baseline="central" >Avg. Rating by Month</text>
<text transform="translate(994.5,185.2) scale(1,1.16)" font-size="8" fill="#222" font-weight="bold" text-anchor="middle" dominant-baseline="central" >4</text>
<text transform="translate(994.5,226.2) scale(1,1.16)" font-size="8" fill="#222" font-weight="bold" text-anchor="middle" dominant-baseline="central" >3</text>
<text transform="translate(994.5,267.2) scale(1,1.16)" font-size="8" fill="#222" font-weight="bold" text-anchor="middle" dominant-baseline="central" >2</text>
<text transform="translate(994.5,308.2) scale(1,1.16)" font-size="8" fill="#222" font-weight="bold" text-anchor="middle" dominant-baseline="central" >1</text>
<text transform="translate(994.5,349.2) scale(1,1.16)" font-size="8" fill="#222" font-weight="bold" text-anchor="middle" dominant-baseline="central" >0</text>
<path d="M1001.3,220.2 C1005.0,218.6 1015.9,210.9 1023.3,210.7 C1030.6,210.5 1037.9,217.1 1045.2,218.9 C1052.5,220.7 1059.9,220.5 1067.2,221.4 C1074.5,222.3 1081.8,223.3 1089.2,224.2 C1096.5,225.2 1103.8,228.5 1111.1,227.1 C1118.4,225.8 1125.8,218.1 1133.1,216.1 C1140.4,214.0 1147.7,211.9 1155.0,214.8 C1162.4,217.8 1169.7,232.7 1177.0,233.7 C1184.3,234.7 1191.7,223.4 1199.0,221.0 C1206.3,218.5 1213.6,216.8 1220.9,218.9 C1228.3,221.0 1239.2,231.2 1242.9,233.7 V350.0 H1001.3 Z" fill="#d0c7c7"/>
<path d="M1001.3,220.2 C1005.0,218.6 1015.9,210.9 1023.3,210.7 C1030.6,210.5 1037.9,217.1 1045.2,218.9 C1052.5,220.7 1059.9,220.5 1067.2,221.4 C1074.5,222.3 1081.8,223.3 1089.2,224.2 C1096.5,225.2 1103.8,228.5 1111.1,227.1 C1118.4,225.8 1125.8,218.1 1133.1,216.1 C1140.4,214.0 1147.7,211.9 1155.0,214.8 C1162.4,217.8 1169.7,232.7 1177.0,233.7 C1184.3,234.7 1191.7,223.4 1199.0,221.0 C1206.3,218.5 1213.6,216.8 1220.9,218.9 C1228.3,221.0 1239.2,231.2 1242.9,233.7" fill="none" stroke="#6b4c4c" stroke-width="2"/>
<text transform="translate(1001.3,357.3) scale(1,1.16)" font-size="8.5" fill="#222" font-weight="bold" text-anchor="middle" dominant-baseline="central" >Feb</text>
<text transform="translate(1023.3,357.3) scale(1,1.16)" font-size="8.5" fill="#222" font-weight="bold" text-anchor="middle" dominant-baseline="central" >Nov</text>
<text transform="translate(1045.2,357.3) scale(1,1.16)" font-size="8.5" fill="#222" font-weight="bold" text-anchor="middle" dominant-baseline="central" >Jun</text>
<text transform="translate(1067.2,357.3) scale(1,1.16)" font-size="8.5" fill="#222" font-weight="bold" text-anchor="middle" dominant-baseline="central" >Jan</text>
<text transform="translate(1089.2,357.3) scale(1,1.16)" font-size="8.5" fill="#222" font-weight="bold" text-anchor="middle" dominant-baseline="central" >Dec</text>
<text transform="translate(1111.1,357.3) scale(1,1.16)" font-size="8.5" fill="#222" font-weight="bold" text-anchor="middle" dominant-baseline="central" >Apr</text>
<text transform="translate(1133.1,357.3) scale(1,1.16)" font-size="8.5" fill="#222" font-weight="bold" text-anchor="middle" dominant-baseline="central" >Jul</text>
<text transform="translate(1155.0,357.3) scale(1,1.16)" font-size="8.5" fill="#222" font-weight="bold" text-anchor="middle" dominant-baseline="central" >Mar</text>
<text transform="translate(1177.0,357.3) scale(1,1.16)" font-size="8.5" fill="#222" font-weight="bold" text-anchor="middle" dominant-baseline="central" >Aug</text>
<text transform="translate(1199.0,357.3) scale(1,1.16)" font-size="8.5" fill="#222" font-weight="bold" text-anchor="middle" dominant-baseline="central" >May</text>
<text transform="translate(1220.9,357.3) scale(1,1.16)" font-size="8.5" fill="#222" font-weight="bold" text-anchor="middle" dominant-baseline="central" >Sep</text>
<text transform="translate(1242.9,357.3) scale(1,1.16)" font-size="8.5" fill="#222" font-weight="bold" text-anchor="middle" dominant-baseline="central" >Oct</text>
<rect x="1001.05" y="207.1" width="0.5" height="13.1" fill="#e6e0e0"/>
<rect x="1023.01" y="197.1" width="0.5" height="13.6" fill="#e6e0e0"/>
<rect x="1044.98" y="207.1" width="0.5" height="11.8" fill="#e6e0e0"/>
<rect x="1066.94" y="208.5" width="0.5" height="12.9" fill="#e6e0e0"/>
<rect x="1088.90" y="212.0" width="0.5" height="12.2" fill="#e6e0e0"/>
<rect x="1110.87" y="215.3" width="0.5" height="11.8" fill="#e6e0e0"/>
<rect x="1132.83" y="203.0" width="0.5" height="13.1" fill="#e6e0e0"/>
<rect x="1154.80" y="201.7" width="0.5" height="13.1" fill="#e6e0e0"/>
<rect x="1176.76" y="220.7" width="0.5" height="13.0" fill="#e6e0e0"/>
<rect x="1198.72" y="207.1" width="0.5" height="13.9" fill="#e6e0e0"/>
<rect x="1220.69" y="206.2" width="0.5" height="12.7" fill="#e6e0e0"/>
<rect x="1242.65" y="220.7" width="0.5" height="13.0" fill="#e6e0e0"/>
<text transform="translate(1001.3,201.1) scale(1,1.16)" font-size="10" fill="#666" font-weight="normal" text-anchor="middle" dominant-baseline="central" >3.2</text>
<text transform="translate(1023.3,191.1) scale(1,1.16)" font-size="10" fill="#666" font-weight="normal" text-anchor="middle" dominant-baseline="central" >3.4</text>
<text transform="translate(1045.2,201.1) scale(1,1.16)" font-size="10" fill="#666" font-weight="normal" text-anchor="middle" dominant-baseline="central" >3.2</text>
<text transform="translate(1067.2,202.5) scale(1,1.16)" font-size="10" fill="#666" font-weight="normal" text-anchor="middle" dominant-baseline="central" >3.1</text>
<text transform="translate(1089.2,206.0) scale(1,1.16)" font-size="10" fill="#666" font-weight="normal" text-anchor="middle" dominant-baseline="central" >3.0</text>
<text transform="translate(1111.1,209.3) scale(1,1.16)" font-size="10" fill="#666" font-weight="normal" text-anchor="middle" dominant-baseline="central" >3.0</text>
<text transform="translate(1133.1,197.0) scale(1,1.16)" font-size="10" fill="#666" font-weight="normal" text-anchor="middle" dominant-baseline="central" >3.3</text>
<text transform="translate(1155.0,195.7) scale(1,1.16)" font-size="10" fill="#666" font-weight="normal" text-anchor="middle" dominant-baseline="central" >3.3</text>
<text transform="translate(1177.0,214.7) scale(1,1.16)" font-size="10" fill="#666" font-weight="normal" text-anchor="middle" dominant-baseline="central" >2.8</text>
<text transform="translate(1199.0,201.1) scale(1,1.16)" font-size="10" fill="#666" font-weight="normal" text-anchor="middle" dominant-baseline="central" >3.1</text>
<text transform="translate(1220.9,200.2) scale(1,1.16)" font-size="10" fill="#666" font-weight="normal" text-anchor="middle" dominant-baseline="central" >3.2</text>
<text transform="translate(1242.9,214.7) scale(1,1.16)" font-size="10" fill="#666" font-weight="normal" text-anchor="middle" dominant-baseline="central" >2.8</text>
<text transform="translate(232.0,421.0) scale(1,1.0)" font-size="10" fill="#111" font-weight="bold" text-anchor="middle" dominant-baseline="central" >Avg. Preparation Time Minutes by Space Type</text>
<text transform="translate(83.2,435.5) scale(1,1.16)" font-size="8" fill="#222" font-weight="bold" text-anchor="end" dominant-baseline="central" >15.00</text>
<text transform="translate(83.2,474.8) scale(1,1.16)" font-size="8" fill="#222" font-weight="bold" text-anchor="end" dominant-baseline="central" >10.00</text>
<text transform="translate(83.2,514.2) scale(1,1.16)" font-size="8" fill="#222" font-weight="bold" text-anchor="end" dominant-baseline="central" >5.00</text>
<text transform="translate(83.2,553.5) scale(1,1.16)" font-size="8" fill="#222" font-weight="bold" text-anchor="end" dominant-baseline="central" >0.00</text>
<rect x="113.2" y="451.2" width="46" height="102.3" rx="1.5" fill="#644647"/>
<text transform="translate(136.2,459.8) scale(1,1.16)" font-size="10" fill="#fff" font-weight="bold" text-anchor="middle" dominant-baseline="central" >13.0</text>
<text transform="translate(136.2,562.0) scale(1,1.16)" font-size="8" fill="#222" font-weight="bold" text-anchor="middle" dominant-baseline="central" >Private Office</text>
<rect x="184.3" y="453.6" width="46" height="99.9" rx="1.5" fill="#644647"/>
<text transform="translate(207.3,462.2) scale(1,1.16)" font-size="10" fill="#fff" font-weight="bold" text-anchor="middle" dominant-baseline="central" >12.7</text>
<text transform="translate(207.3,562.0) scale(1,1.16)" font-size="8" fill="#222" font-weight="bold" text-anchor="middle" dominant-baseline="central" >Hot Desk</text>
<rect x="256" y="452.8" width="46" height="100.7" rx="1.5" fill="#644647"/>
<text transform="translate(279.0,461.4) scale(1,1.16)" font-size="10" fill="#fff" font-weight="bold" text-anchor="middle" dominant-baseline="central" >12.8</text>
<text transform="translate(279.0,562.0) scale(1,1.16)" font-size="8" fill="#222" font-weight="bold" text-anchor="middle" dominant-baseline="central" >Desk</text>
<rect x="327.2" y="460.7" width="46" height="92.8" rx="1.5" fill="#644647"/>
<text transform="translate(350.2,469.3) scale(1,1.16)" font-size="10" fill="#fff" font-weight="bold" text-anchor="middle" dominant-baseline="central" >11.8</text>
<text transform="translate(350.2,562.0) scale(1,1.16)" font-size="8" fill="#222" font-weight="bold" text-anchor="middle" dominant-baseline="central" >Meeting Room</text>
<text transform="translate(515.2,419.3) scale(1,1.16)" font-size="8.3" fill="#111" font-weight="bold" text-anchor="middle" dominant-baseline="central" ># Of Booking by Space Type</text>
<path d="M515.80,465.10 L515.80,431.60 A67,67 0 0 1 581.77,486.87 L548.78,492.74 A33.5,33.5 0 0 0 515.80,465.10 Z" fill="#cdb9b9"/>
<path d="M548.78,492.74 L581.77,486.87 A67,67 0 0 1 534.09,563.06 L524.94,530.83 A33.5,33.5 0 0 0 548.78,492.74 Z" fill="#5f4142"/>
<path d="M524.94,530.83 L534.09,563.06 A67,67 0 0 1 448.93,502.81 L482.37,500.70 A33.5,33.5 0 0 0 524.94,530.83 Z" fill="#cdb9b9"/>
<path d="M482.37,500.70 L448.93,502.81 A67,67 0 0 1 515.80,431.60 L515.80,465.10 A33.5,33.5 0 0 0 482.37,500.70 Z" fill="#5f4142"/>
<text transform="translate(551.5,459.0) scale(1,1.16)" font-size="11.4" fill="#fff" font-weight="bold" text-anchor="middle" dominant-baseline="central"  stroke="#fff" stroke-width="0.25">111</text>
<text transform="translate(558.2,524.0) scale(1,1.16)" font-size="11.4" fill="#fff" font-weight="bold" text-anchor="middle" dominant-baseline="central"  stroke="#fff" stroke-width="0.25">117</text>
<text transform="translate(486.8,540.0) scale(1,1.16)" font-size="10.8" fill="#333" font-weight="normal" text-anchor="middle" dominant-baseline="central" >142</text>
<text transform="translate(479.0,464.0) scale(1,1.16)" font-size="11.4" fill="#fff" font-weight="bold" text-anchor="middle" dominant-baseline="central"  stroke="#fff" stroke-width="0.25">130</text>
<clipPath id="dclip"><rect x="423" y="405" width="181" height="181.3"/></clipPath><g clip-path="url(#dclip)">
<circle cx="453" cy="573.6" r="5" fill="#cdb9b9"/>
<text transform="translate(464.5,573.6) scale(1,1.16)" font-size="8.3" fill="#222" font-weight="bold" text-anchor="start" dominant-baseline="central" >Private Office</text>
<circle cx="536.4" cy="573.6" r="5" fill="#5f4142"/>
<text transform="translate(547.9,573.6) scale(1,1.16)" font-size="8.3" fill="#222" font-weight="bold" text-anchor="start" dominant-baseline="central" >Hot Desk</text>
<circle cx="458.8" cy="588.3" r="5" fill="#cdb9b9"/>
<text transform="translate(470.3,588.3) scale(1,1.16)" font-size="8.3" fill="#222" font-weight="bold" text-anchor="start" dominant-baseline="central" >Desk</text>
<circle cx="508.9" cy="588.3" r="5" fill="#5f4142"/>
<text transform="translate(520.4,588.3) scale(1,1.16)" font-size="8.3" fill="#222" font-weight="bold" text-anchor="start" dominant-baseline="central" >Meeting Room</text>
</g>
<text transform="translate(933.5,418.9) scale(1,1.0)" font-size="10" fill="#111" font-weight="bold" text-anchor="middle" dominant-baseline="central" >Avg. Number Of Attendees by Month</text>
<text transform="translate(659.0,428.0) scale(1,1.16)" font-size="8" fill="#222" font-weight="bold" text-anchor="middle" dominant-baseline="central" >3</text>
<text transform="translate(659.0,469.5) scale(1,1.16)" font-size="8" fill="#222" font-weight="bold" text-anchor="middle" dominant-baseline="central" >2</text>
<text transform="translate(659.0,511.0) scale(1,1.16)" font-size="8" fill="#222" font-weight="bold" text-anchor="middle" dominant-baseline="central" >1</text>
<text transform="translate(659.0,552.5) scale(1,1.16)" font-size="8" fill="#222" font-weight="bold" text-anchor="middle" dominant-baseline="central" >0</text>
<rect x="681.9" y="457.4" width="28.6" height="95.1" rx="1.5" fill="#b89494"/>
<text transform="translate(696.2,465.4) scale(1,1.16)" font-size="10.2" fill="#fff" font-weight="bold" text-anchor="middle" dominant-baseline="central" >2.3</text>
<text transform="translate(696.2,560.8) scale(1,1.16)" font-size="8" fill="#222" font-weight="bold" text-anchor="middle" dominant-baseline="central" >Feb</text>
<rect x="726.9" y="448.9" width="28.6" height="103.6" rx="1.5" fill="#b89494"/>
<text transform="translate(741.2,456.9) scale(1,1.16)" font-size="10.2" fill="#fff" font-weight="bold" text-anchor="middle" dominant-baseline="central" >2.5</text>
<text transform="translate(741.2,560.8) scale(1,1.16)" font-size="8" fill="#222" font-weight="bold" text-anchor="middle" dominant-baseline="central" >Nov</text>
<rect x="771.9" y="504.5" width="28.6" height="48.0" rx="1.5" fill="#b89494"/>
<text transform="translate(786.2,512.5) scale(1,1.16)" font-size="10.2" fill="#fff" font-weight="bold" text-anchor="middle" dominant-baseline="central" >1.2</text>
<text transform="translate(786.2,560.8) scale(1,1.16)" font-size="8" fill="#222" font-weight="bold" text-anchor="middle" dominant-baseline="central" >Jun</text>
<rect x="816.9" y="451.8" width="28.6" height="100.7" rx="1.5" fill="#b89494"/>
<text transform="translate(831.2,459.8) scale(1,1.16)" font-size="10.2" fill="#fff" font-weight="bold" text-anchor="middle" dominant-baseline="central" >2.5</text>
<text transform="translate(831.2,560.8) scale(1,1.16)" font-size="8" fill="#222" font-weight="bold" text-anchor="middle" dominant-baseline="central" >Jan</text>
<rect x="861.9" y="477.0" width="28.6" height="75.5" rx="1.5" fill="#b89494"/>
<text transform="translate(876.2,485.0) scale(1,1.16)" font-size="10.2" fill="#fff" font-weight="bold" text-anchor="middle" dominant-baseline="central" >1.8</text>
<text transform="translate(876.2,560.8) scale(1,1.16)" font-size="8" fill="#222" font-weight="bold" text-anchor="middle" dominant-baseline="central" >Dec</text>
<rect x="906.9" y="440.6" width="28.6" height="111.9" rx="1.5" fill="#b89494"/>
<text transform="translate(921.2,448.6) scale(1,1.16)" font-size="10.2" fill="#fff" font-weight="bold" text-anchor="middle" dominant-baseline="central" >2.7</text>
<text transform="translate(921.2,560.8) scale(1,1.16)" font-size="8" fill="#222" font-weight="bold" text-anchor="middle" dominant-baseline="central" >Apr</text>
<rect x="951.9" y="483.7" width="28.6" height="68.8" rx="1.5" fill="#b89494"/>
<text transform="translate(966.2,491.7) scale(1,1.16)" font-size="10.2" fill="#fff" font-weight="bold" text-anchor="middle" dominant-baseline="central" >1.7</text>
<text transform="translate(966.2,560.8) scale(1,1.16)" font-size="8" fill="#222" font-weight="bold" text-anchor="middle" dominant-baseline="central" >Jul</text>
<rect x="996.9" y="452.5" width="28.6" height="100.0" rx="1.5" fill="#b89494"/>
<text transform="translate(1011.2,460.5) scale(1,1.16)" font-size="10.2" fill="#fff" font-weight="bold" text-anchor="middle" dominant-baseline="central" >2.4</text>
<text transform="translate(1011.2,560.8) scale(1,1.16)" font-size="8" fill="#222" font-weight="bold" text-anchor="middle" dominant-baseline="central" >Mar</text>
<rect x="1041.9" y="447.4" width="28.6" height="105.1" rx="1.5" fill="#b89494"/>
<text transform="translate(1056.2,455.4) scale(1,1.16)" font-size="10.2" fill="#fff" font-weight="bold" text-anchor="middle" dominant-baseline="central" >2.6</text>
<text transform="translate(1056.2,560.8) scale(1,1.16)" font-size="8" fill="#222" font-weight="bold" text-anchor="middle" dominant-baseline="central" >Aug</text>
<rect x="1086.9" y="439.9" width="28.6" height="112.6" rx="1.5" fill="#b89494"/>
<text transform="translate(1101.2,447.9) scale(1,1.16)" font-size="10.2" fill="#fff" font-weight="bold" text-anchor="middle" dominant-baseline="central" >2.7</text>
<text transform="translate(1101.2,560.8) scale(1,1.16)" font-size="8" fill="#222" font-weight="bold" text-anchor="middle" dominant-baseline="central" >May</text>
<rect x="1131.9" y="459.7" width="28.6" height="92.8" rx="1.5" fill="#b89494"/>
<text transform="translate(1146.2,467.7) scale(1,1.16)" font-size="10.2" fill="#fff" font-weight="bold" text-anchor="middle" dominant-baseline="central" >2.3</text>
<text transform="translate(1146.2,560.8) scale(1,1.16)" font-size="8" fill="#222" font-weight="bold" text-anchor="middle" dominant-baseline="central" >Sep</text>
<rect x="1176.9" y="461.3" width="28.6" height="91.2" rx="1.5" fill="#b89494"/>
<text transform="translate(1191.2,469.3) scale(1,1.16)" font-size="10.2" fill="#fff" font-weight="bold" text-anchor="middle" dominant-baseline="central" >2.2</text>
<text transform="translate(1191.2,560.8) scale(1,1.16)" font-size="8" fill="#222" font-weight="bold" text-anchor="middle" dominant-baseline="central" >Oct</text></svg></body></html>
